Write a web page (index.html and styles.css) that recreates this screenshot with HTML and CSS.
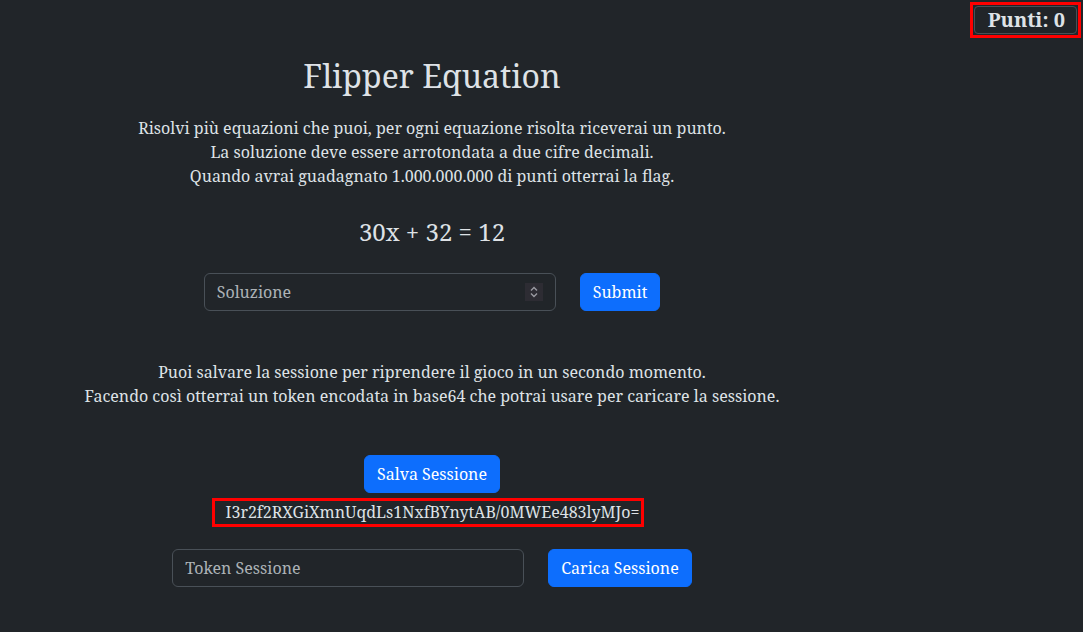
FILE: index.html
```html
<!DOCTYPE html>
<html lang="it">
<head>
<meta charset="utf-8">
<title>Flipper Equation</title>
<link rel="stylesheet" href="styles.css">
</head>
<body>
<div class="page">
  <main class="main">
    <h1 class="title">Flipper Equation</h1>
    <p class="intro">Risolvi più equazioni che puoi, per ogni equazione risolta riceverai un punto.<br>La soluzione deve essere arrotondata a due cifre decimali.<br>Quando avrai guadagnato 1.000.000.000 di punti otterrai la flag.</p>
    <h4 class="equation">30x + 32 = 12</h4>
    <form class="row-form answer-form">
      <span class="number-wrap">
        <input class="field" type="number" placeholder="Soluzione">
        <span class="spin" aria-hidden="true">
          <svg width="18" height="18" viewBox="0 0 18 18">
            <path d="M6 7.5 L9 4.5 L12 7.5" fill="none" stroke="#9a9aa2" stroke-width="1.4"/>
            <path d="M6 10.5 L9 13.5 L12 10.5" fill="none" stroke="#9a9aa2" stroke-width="1.4"/>
          </svg>
        </span>
      </span>
      <button class="btn" type="button">Submit</button>
    </form>
    <p class="session-info">Puoi salvare la sessione per riprendere il gioco in un secondo momento.<br>Facendo così otterrai un token encodata in base64 che potrai usare per caricare la sessione.</p>
    <div class="save">
      <button class="btn" type="button">Salva Sessione</button>
      <span class="token">I3r2f2RXGiXmnUqdLs1NxfBYnytAB/0MWEe483lyMJo=</span>
    </div>
    <form class="row-form load-form">
      <input class="field" type="text" placeholder="Token Sessione">
      <button class="btn" type="button">Carica Sessione</button>
    </form>
  </main>
  <aside class="aside">
    <div class="score-mark">
      <div class="score">Punti: 0</div>
    </div>
  </aside>
</div>
</body>
</html>
```

FILE: styles.css
```css
html, body {
  margin: 0;
  padding: 0;
  background: #212529;
  color: #dee2e6;
  font-family: "Noto Serif", "DejaVu Serif", "Liberation Serif", serif;
  font-size: 16px;
  line-height: 1.5;
  color-scheme: dark;
}

.page {
  display: flex;
  align-items: flex-start;
}

.main {
  width: 864px;
  display: flex;
  flex-direction: column;
  align-items: center;
  text-align: center;
}

.aside {
  flex: 1;
  display: flex;
  justify-content: flex-end;
  padding: 2px 2px 0 0;
}

.score-mark {
  border: 3px solid #ff0000;
  padding: 1px;
}

.score {
  border: 1px solid #495057;
  border-radius: 4px;
  padding: 0 11px 0 13px;
  font-weight: 700;
  font-size: 20px;
  line-height: 26px;
}

.title {
  margin: 57px 0 0;
  font-size: 32px;
  font-weight: 400;
  line-height: 1.2;
}

.intro {
  margin: 21px 0 0;
}

.equation {
  margin: 30px 0 0;
  font-size: 24px;
  font-weight: 400;
  line-height: 1.2;
}

.row-form {
  display: flex;
  gap: 24px;
}

.answer-form {
  margin-top: 26px;
}

.load-form {
  margin-top: 22px;
}

.number-wrap {
  position: relative;
  display: block;
}

.number-wrap .field {
  display: block;
}

.field::-webkit-inner-spin-button,
.field::-webkit-outer-spin-button {
  -webkit-appearance: none;
  margin: 0;
}

.spin {
  position: absolute;
  top: 10px;
  right: 13px;
  width: 18px;
  height: 18px;
  background: #2d2c33;
  display: block;
}

.spin svg {
  display: block;
}

.field {
  width: 352px;
  box-sizing: border-box;
  height: 38px;
  padding: 6px 12px;
  font: inherit;
  color: #dee2e6;
  background: #212529;
  border: 1px solid #495057;
  border-radius: 6px;
}

.field::placeholder {
  color: rgba(222, 226, 230, 0.75);
}

.btn {
  height: 38px;
  padding: 6px 12px;
  font: inherit;
  color: #fff;
  background: #0d6efd;
  border: 1px solid #0d6efd;
  border-radius: 6px;
}

.session-info {
  margin: 49px 0 0;
}

.save {
  margin-top: 47px;
  display: flex;
  flex-direction: column;
  align-items: center;
  gap: 5px;
}

.token {
  border: 3px solid #ff0000;
  padding: 0 2px 0 11px;
  margin-right: 8px;
  line-height: 23px;
}
```
